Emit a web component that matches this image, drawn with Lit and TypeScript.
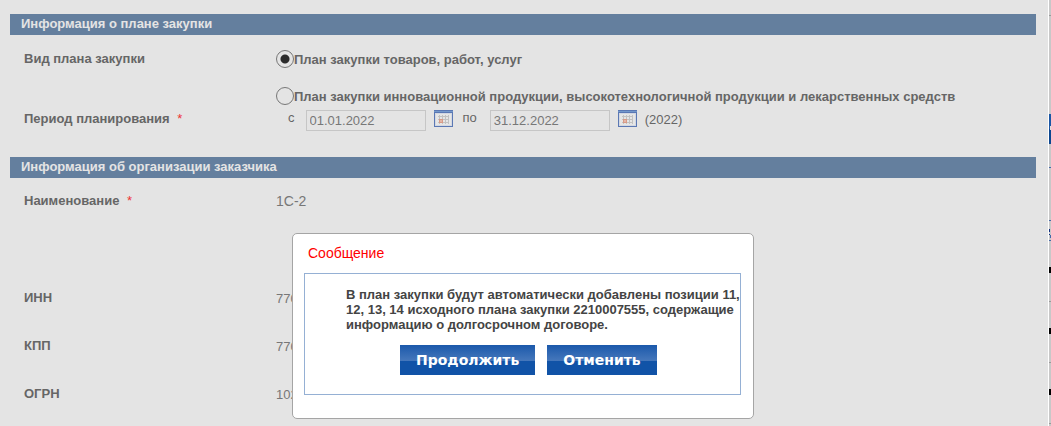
import { LitElement, html, css, svg } from "lit";
import { customElement, property, state } from "lit/decorators.js";

@customElement("calendar-button")
class CalendarButton extends LitElement {
  @property() label = "";

  static styles = css`
    :host { display: block; }
    button { display: block; padding: 0; border: 0; background: none; cursor: pointer; }
    svg { display: block; }
  `;

  render() {
    return html`<button type="button" aria-label=${this.label}>
      <svg width="19" height="17" viewBox="0 0 19 17" shape-rendering="crispEdges" aria-hidden="true">
        <rect width="19" height="17" fill="#5b78b4" />
        <rect y="1" width="19" height="1" fill="#7398cb" />
        <rect x="1" y="3" width="17" height="13" fill="#d3d8e2" />
        <rect x="2" y="4" width="15" height="11" fill="#e6e6e6" />
        ${[5, 8, 11, 14].map((x) => svg`<rect x=${x} y="5" width="1" height="9" fill="#c2c2c2" />`)}
        ${[6, 9, 12].map((y) => svg`<rect x="4" y=${y} width="11" height="1" fill="#c2c2c2" />`)}
        <rect x="5" y="9" width="4" height="4" fill="#d99a86" />
        <rect x="6" y="10" width="2" height="2" fill="#e3b7a8" />
      </svg>
    </button>`;
  }
}

@customElement("app-root")
class AppRoot extends LitElement {
  @state() private plan = "goods";

  static styles = css`
    :host {
      display: block;
      font: 13px/15px "Liberation Sans", Arial, sans-serif;
      color: #666;
    }
    * { box-sizing: border-box; }
    .page {
      display: flex;
      min-height: 100vh;
      background: #e4e4e4;
      overflow: hidden;
    }
    .form { flex: 1; position: relative; margin: 14px 12px 0 10px; }
    h2 {
      margin: 0;
      padding: 2px 11px 4px;
      font-size: 13px;
      line-height: 15px;
      background: #647f9e;
      color: #e4e4e4;
    }
    .fields { display: grid; grid-template-columns: 252px 1fr; padding-left: 14px; }
    .plan { padding-top: 15px; padding-bottom: 26px; row-gap: 5px; }
    .plan .name { padding-top: 1px; }
    .org { padding-top: 15px; }
    .name { font-weight: bold; }
    .required { margin-left: 4px; color: #e33; font-weight: normal; }
    .radios { display: flex; flex-direction: column; gap: 19px; }
    .radios label { display: flex; align-items: center; font-weight: bold; }
    input[type="radio"] {
      appearance: none;
      flex: none;
      width: 18px;
      height: 18px;
      margin: 0;
      border: 1px solid #777;
      border-radius: 50%;
      background: #e4e4e4;
    }
    input[type="radio"]:checked {
      background: radial-gradient(circle, #2b2b2b 4px, #e4e4e4 5px);
    }
    .period { display: flex; align-items: flex-start; padding-left: 12px; }
    .date {
      width: 120px;
      height: 21px;
      padding: 0 3px;
      border: 1px solid #c6c6c6;
      background: #e4e4e4;
      font: inherit;
      color: #777;
    }
    .period calendar-button { margin: 0 10px 0 8px; }
    .from { margin-right: 11px; }
    .to { margin-right: 13px; }
    .year { margin-left: -2px; padding-top: 2px; }
    .org { margin: 0; }
    dt { height: 48px; }
    dd { margin: 0; padding-top: 1px; height: 48px; color: #777; }
    .tall { height: 97px; font-size: 14px; }
    .overlay {
      position: absolute;
      top: 219px;
      left: 0;
      right: 0;
      display: flex;
      justify-content: center;
    }
    .dialog {
      width: 462px;
      padding: 11px 12px 23px 11px;
      border: 1px solid #a5a5a5;
      border-radius: 5px;
      background: #fff;
    }
    h3 { margin: 0 0 12px; padding-left: 4px; font-size: 14px; line-height: 16px; font-weight: normal; color: #f00; }
    .message { padding: 13px 0 19px; border: 1px solid #95b0d4; color: #444; }
    p { margin: 0 0 13px; padding-left: 41px; font-weight: bold; }
    .actions { display: flex; gap: 12px; padding-left: 95px; }
    .action {
      height: 30px;
      padding: 0 16px;
      border: 0;
      background: linear-gradient(#1b59ab, #4577bb 52%, #1153a7 53%, #1153a7);
      color: #fff;
      font: bold 14px/30px "DejaVu Sans", Verdana, sans-serif;
    }
    .edge { flex: none; width: 3px; height: 100vh; }
  `;

  private radio(value: string, text: string) {
    return html`<label>
      <input type="radio" name="plan" value=${value} .checked=${this.plan === value}
        @change=${() => (this.plan = value)} />${text}
    </label>`;
  }

  render() {
    const rows = [
      { name: "Наименование", value: "1С-2", required: true },
      { name: "ИНН", value: "770" },
      { name: "КПП", value: "770" },
      { name: "ОГРН", value: "102" },
    ];
    return html`<div class="page">
      <main class="form">
        <h2>Информация о плане закупки</h2>
        <div class="fields plan">
          <div class="name" id="kind">Вид плана закупки</div>
          <div class="radios" role="radiogroup" aria-labelledby="kind">
            ${this.radio("goods", "План закупки товаров, работ, услуг")}
            ${this.radio("innovation", "План закупки инновационной продукции, высокотехнологичной продукции и лекарственных средств")}
          </div>
          <div class="name">Период планирования <span class="required">*</span></div>
          <div class="period">
            <label class="from" for="from">с</label>
            <input class="date" id="from" value="01.01.2022" />
            <calendar-button label="Дата начала"></calendar-button>
            <label class="to" for="to">по</label>
            <input class="date" id="to" value="31.12.2022" />
            <calendar-button label="Дата окончания"></calendar-button>
            <span class="year">(2022)</span>
          </div>
        </div>
        <h2>Информация об организации заказчика</h2>
        <dl class="fields org">
          ${rows.map((r) => html`<dt class="name">${r.name}
              ${r.required ? html`<span class="required">*</span>` : ""}</dt>
            <dd class=${r.required ? "tall" : ""}>${r.value}</dd>`)}
        </dl>
        <div class="overlay">
          <section class="dialog" role="dialog" aria-labelledby="title">
            <h3 id="title">Сообщение</h3>
            <div class="message">
              <p>В план закупки будут автоматически добавлены позиции 11, 12, 13, 14 исходного плана закупки 2210007555, содержащие информацию о долгосрочном договоре.</p>
              <div class="actions">
                <button class="action" type="button">Продолжить</button>
                <button class="action" type="button">Отменить</button>
              </div>
            </div>
          </section>
        </div>
      </main>
      <svg class="edge" viewBox="0 0 3 426" preserveAspectRatio="none" shape-rendering="crispEdges" aria-hidden="true">
        <rect width="3" height="426" fill="#c8c8c8" />
        <rect width="1" height="426" fill="#fff" />
        ${[15, 301, 362, 423].map((y) => svg`<rect x="1" y=${y} width="2" height="1" fill="#999" />`)}
        <rect x="1" y="114" width="2" height="15" fill="#1b57a5" />
        <rect x="1" y="129" width="2" height="15" fill="#0c4790" />
        <rect x="2" y="126" width="1" height="4" fill="#ddd" />
        ${[167, 220, 240].map((y) => svg`<rect x="1" y=${y} width="2" height="1" fill="#4468a8" />`)}
        <rect x="1" y="229" width="1" height="3" fill="#103080" />
        <rect x="1" y="234" width="1" height="1" fill="#103080" />
        <rect x="2" y="235" width="1" height="3" fill="#4468a8" />
        ${[267, 328, 389].map((y) => svg`<rect x="1" y=${y} width="2" height="6" fill="#000" />`)}
      </svg>
    </div>`;
  }
}
